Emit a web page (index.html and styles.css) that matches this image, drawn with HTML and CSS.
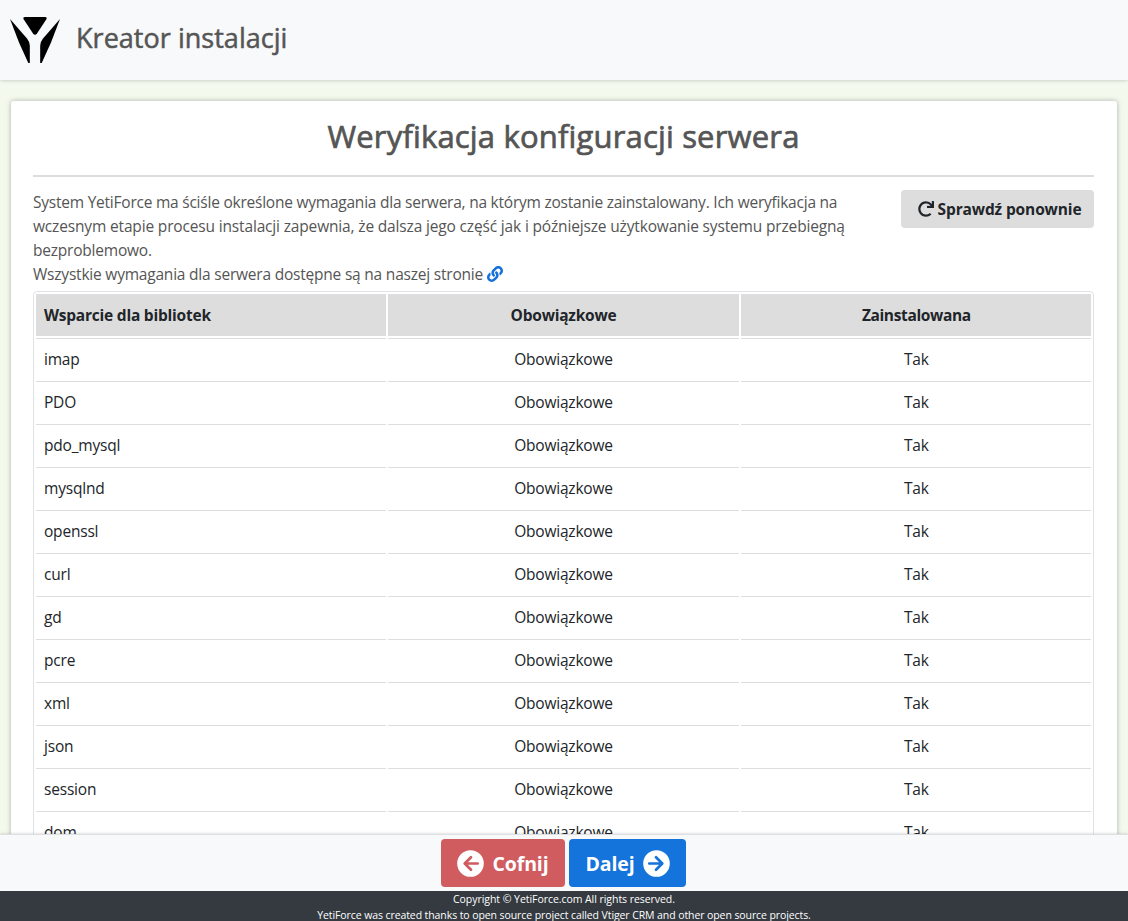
FILE: index.html
```html
<!DOCTYPE html>
<html lang="pl">
<head>
<meta charset="utf-8">
<title>Kreator instalacji</title>
<link rel="stylesheet" href="styles.css">
</head>
<body>
<div class="page">
  <header class="header">
    <svg class="logo" viewBox="0 0 50 48" aria-hidden="true">
      <path d="M15 1h20q2.600 0 1.200 2.500L27 17.500q-2 2.400-4 0L13.800 3.500Q12.400 1 15 1Z"/>
      <path d="M0 3l17 19.500q2.800 3.500 2.800 7V47h-1.500L9 26.500Z"/>
      <path d="M50 3L33 22.500q-2.800 3.500-2.800 7V47h1.500L41 26.500Z"/>
    </svg>
    <h1 class="brand">Kreator instalacji</h1>
  </header>
  <main class="main">
    <section class="card">
      <h2 class="title">Weryfikacja konfiguracji serwera</h2>
      <hr class="rule">
      <div class="intro">
        <p class="intro-text">
          <span class="line l1">System YetiForce ma ściśle określone wymagania dla serwera, na którym zostanie zainstalowany. Ich weryfikacja na</span>
          <span class="line l2">wczesnym etapie procesu instalacji zapewnia, że dalsza jego część jak i późniejsze użytkowanie systemu przebiegną</span>
          <span class="line">bezproblemowo.</span>
          <span class="line">Wszystkie wymagania dla serwera dostępne są na naszej stronie <a class="link" href="#"><svg viewBox="0 0 512 512"><path d="M326.612 185.391c59.747 59.809 58.927 155.698.36 214.590-.110.120-.240.250-.360.370l-67.200 67.200c-59.270 59.270-155.699 59.262-214.960 0-59.270-59.260-59.270-155.700 0-214.960l37.106-37.106c9.840-9.840 26.786-3.300 27.294 10.606.648 17.722 3.826 35.527 9.690 52.721 1.986 5.822.567 12.262-3.783 16.612l-13.087 13.087c-28.026 28.026-28.905 73.660-1.155 101.960 28.024 28.579 74.086 28.749 102.325.510l67.200-67.190c28.191-28.191 28.073-73.757 0-101.830-3.701-3.694-7.429-6.564-10.341-8.569a16.037 16.037 0 0 1-6.947-12.606c-.396-10.567 3.348-21.456 11.698-29.806l21.054-21.055c5.521-5.521 14.182-6.199 20.584-1.731a152.482 152.482 0 0 1 20.522 17.197zM467.547 44.449c-59.261-59.262-155.690-59.270-214.960 0l-67.200 67.200c-.120.120-.250.250-.360.370-58.566 58.892-59.387 154.781.360 214.590a152.454 152.454 0 0 0 20.521 17.196c6.402 4.468 15.064 3.789 20.584-1.731l21.054-21.055c8.350-8.350 12.094-19.239 11.698-29.806a16.037 16.037 0 0 0-6.947-12.606c-2.912-2.005-6.640-4.875-10.341-8.569-28.073-28.073-28.191-73.639 0-101.830l67.200-67.190c28.239-28.239 74.300-28.069 102.325.510 27.750 28.300 26.872 73.934-1.155 101.960l-13.087 13.087c-4.350 4.350-5.769 10.790-3.783 16.612 5.864 17.194 9.042 34.999 9.690 52.721.509 13.906 17.454 20.446 27.294 10.606l37.106-37.106c59.271-59.259 59.271-155.699.001-214.959z"/></svg></a></span>
        </p>
        <button class="btn recheck"><svg viewBox="0 0 512 512"><path d="M500.330 0h-47.410a12 12 0 0 0-12 12.570l4 82.760A247.420 247.420 0 0 0 256 8C119.340 8 7.900 119.530 8 256.190 8.100 393.070 119.100 504 256 504a247.100 247.100 0 0 0 166.180-63.910 12 12 0 0 0 .480-17.430l-34-34a12 12 0 0 0-16.380-.550A176 176 0 1 1 402.100 157.800l-101.530-4.870a12 12 0 0 0-12.570 12v47.410a12 12 0 0 0 12 12h200.330a12 12 0 0 0 12-12V12a12 12 0 0 0-12-12z"/></svg><span>Sprawdź ponownie</span></button>
      </div>
      <div class="table">
        <div class="row head"><div>Wsparcie dla bibliotek</div><div>Obowiązkowe</div><div>Zainstalowana</div></div>
        <div class="row"><div>imap</div><div>Obowiązkowe</div><div>Tak</div></div>
        <div class="row"><div>PDO</div><div>Obowiązkowe</div><div>Tak</div></div>
        <div class="row"><div>pdo_mysql</div><div>Obowiązkowe</div><div>Tak</div></div>
        <div class="row"><div>mysqlnd</div><div>Obowiązkowe</div><div>Tak</div></div>
        <div class="row"><div>openssl</div><div>Obowiązkowe</div><div>Tak</div></div>
        <div class="row"><div>curl</div><div>Obowiązkowe</div><div>Tak</div></div>
        <div class="row"><div>gd</div><div>Obowiązkowe</div><div>Tak</div></div>
        <div class="row"><div>pcre</div><div>Obowiązkowe</div><div>Tak</div></div>
        <div class="row"><div>xml</div><div>Obowiązkowe</div><div>Tak</div></div>
        <div class="row"><div>json</div><div>Obowiązkowe</div><div>Tak</div></div>
        <div class="row"><div>session</div><div>Obowiązkowe</div><div>Tak</div></div>
        <div class="row"><div>dom</div><div>Obowiązkowe</div><div>Tak</div></div>
      </div>
    </section>
  </main>
  <div class="actions">
    <button class="btn nav back"><svg viewBox="0 0 28 28"><circle cx="14" cy="14" r="13.800"/><path d="M14.500 7.500L8 14l6.500 6.500M8.500 14H21.500"/></svg><span>Cofnij</span></button>
    <button class="btn nav next"><span>Dalej</span><svg viewBox="0 0 28 28"><circle cx="14" cy="14" r="13.800"/><path d="M13.500 7.500L20 14l-6.500 6.500M19.500 14H6.500"/></svg></button>
  </div>
  <footer class="footer">
    <p class="copy">Copyright © YetiForce.com All rights reserved.</p>
    <p class="credits">YetiForce was created thanks to open source project called Vtiger CRM and other open source projects.</p>
  </footer>
</div>
</body>
</html>
```
FILE: styles.css
```css
* { box-sizing: border-box; }
body {
  margin: 0;
  font: 16px/24px "Open Sans", "Noto Sans", sans-serif;
  color: #212529;
  background: #f4f9ee;
  overflow: hidden;
}
h1, h2, p { margin: 0; }
.page { display: flex; flex-direction: column; height: 921px; }
.header {
  flex: none;
  height: 80px;
  display: flex;
  align-items: flex-start;
  padding: 16px 10px;
  gap: 16px;
  background: #f8f9fb;
  box-shadow: 0 0 4px rgba(0, 0, 0, .25);
}
.logo { width: 50px; height: 48px; flex: none; }
.brand {
  color: #555;
  font-size: 27px;
  font-weight: 500;
  line-height: 44px;
  white-space: nowrap;
  letter-spacing: .03px;
  -webkit-text-stroke: .5px #555;
}
.main { flex: 1; min-height: 0; overflow: hidden; padding: 21px 11px 0; }
.card {
  height: 900px;
  padding: 14px 23px 0 22px;
  background: #fff;
  border-radius: 3px;
  box-shadow: 0 0 5px rgba(0, 0, 0, .3);
}
.title {
  height: 60px;
  line-height: 42px;
  color: #555;
  font-size: 31px;
  font-weight: 500;
  letter-spacing: .17px;
  text-align: center;
  white-space: nowrap;
  -webkit-text-stroke: .7px #555;
}
.rule { height: 2px; margin: 0; border: 0; background: #ddd; }
.intro { display: flex; justify-content: space-between; height: 114px; padding-top: 13px; }
.intro-text { color: #555; white-space: nowrap; font-size: 15.500px; letter-spacing: -.21px; }
.line { display: block; height: 24px; }
.l1 { letter-spacing: -.23px; }
.l2 { letter-spacing: -.16px; }
.link svg { width: 16px; height: 16px; fill: #1570d8; vertical-align: -2px; }
.btn {
  display: flex;
  align-items: center;
  justify-content: center;
  border: 0;
  border-radius: 4px;
  padding: 0;
  font-family: inherit;
  font-weight: 700;
  white-space: nowrap;
}
.recheck {
  width: 193px;
  height: 38px;
  padding-left: 4px;
  gap: 4px;
  background: #ddd;
  color: #212529;
  font-size: 15.500px;
  letter-spacing: -.13px;
}
.recheck svg { width: 16px; height: 16px; fill: #212529; }
.table {
  border: 1px solid #dee2e6;
  border-radius: 4px;
  padding: 2px 2px 0;
  font-size: 15.500px;
  letter-spacing: -.2px;
}
.row {
  display: grid;
  grid-template-columns: repeat(3, 1fr);
  gap: 2px;
  height: 43px;
}
.row > div { border-top: 1px solid #dedede; padding: 8px; text-align: center; }
.row > div:first-child { text-align: left; }
.row > div:last-child { padding-left: 9px; }
.head { height: 44px; padding-bottom: 2px; font-weight: 700; letter-spacing: -.22px; }
.head > div { background: #ddd; }
.head > div:last-child { letter-spacing: -.36px; }
.actions {
  flex: none;
  display: flex;
  justify-content: center;
  gap: 4px;
  height: 57px;
  padding: 4px 1px 0 0;
  border-top: 1px solid #dedfe1;
  background: #f8f9fb;
  box-shadow: 0 0 3px rgba(0, 0, 0, .2);
  position: relative;
}
.nav { height: 48px; color: #fff; font-size: 19.500px; gap: 8px; letter-spacing: -.1px; }
.nav svg { width: 27px; height: 27px; fill: #fff; }
.nav path { fill: none; stroke-width: 2.800; stroke-linecap: round; stroke-linejoin: round; }
.back { width: 124px; background: #d05c60; }
.back path { stroke: #d05c60; }
.next { width: 117px; background: #1573dc; }
.next path { stroke: #1573dc; }
.footer {
  flex: none;
  height: 30px;
  background: #343a40;
  color: #fff;
  text-align: center;
  font-size: 10.500px;
  line-height: 16px;
  white-space: nowrap;
  overflow: hidden;
  position: relative;
}
.copy { letter-spacing: -.05px; }
.credits { letter-spacing: -.09px; }
```
